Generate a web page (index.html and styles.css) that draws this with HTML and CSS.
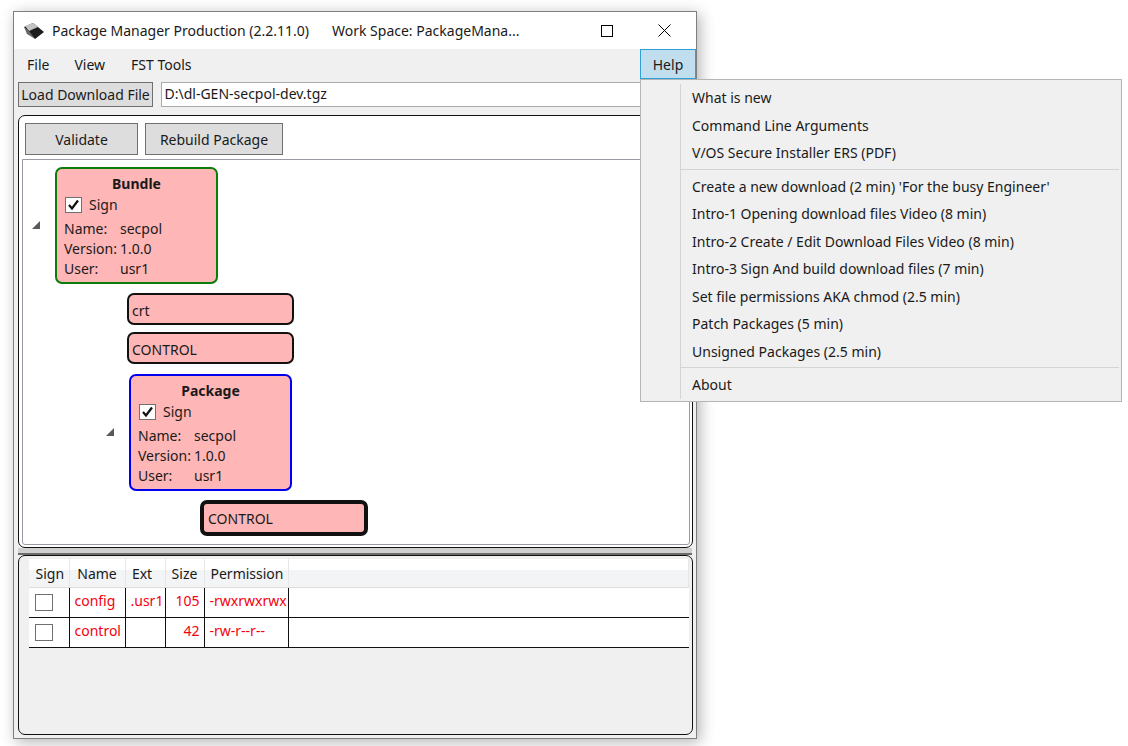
FILE: index.html
```html
<!DOCTYPE html>
<html>
<head>
<meta charset="utf-8"/>
<title>Package Manager Production</title>
<link rel="stylesheet" href="styles.css">
</head>
<body>

<div class="window">

  <div class="titlebar">
    <svg class="app-icon" width="22" height="18" viewBox="0 0 22 18">
      <polygon points="1,5 10,1 21,10 12,17" fill="#1c1c1c"/>
      <polygon points="2,4 10,1 15,5 6,9" fill="#c4c4c4"/>
      <polygon points="1,5 6,9 12,17 4,12" fill="#666"/>
    </svg>
    <span class="title">Package Manager Production (2.2.11.0)</span>
    <span class="workspace">Work Space: PackageMana...</span>
    <svg class="win-btn" width="12" height="12" viewBox="0 0 12 12"><rect x="0.5" y="0.5" width="11" height="11" fill="none" stroke="#000"/></svg>
    <svg class="win-btn close" width="13" height="13" viewBox="0 0 13 13"><path d="M0.5 0.5L12.5 12.5M12.5 0.5L0.5 12.5" fill="none" stroke="#000"/></svg>
  </div>

  <div class="menubar">
    <span class="menu-item">File</span>
    <span class="menu-item">View</span>
    <span class="menu-item">FST Tools</span>
    <span class="menu-help">Help</span>
  </div>

  <div class="filerow">
    <button class="load-btn">Load Download File</button>
    <div class="path">D:\dl-GEN-secpol-dev.tgz</div>
  </div>

  <div class="panel top-panel">
    <div class="actions">
      <button class="btn validate">Validate</button>
      <button class="btn rebuild">Rebuild Package</button>
    </div>
    <div class="tree">

      <div class="node bundle-node">
        <svg class="arrow" width="9" height="9" viewBox="0 0 9 9"><polygon points="0,8 8,0 8,8" fill="#595959"/></svg>
        <div class="card bundle">
          <div class="card-title">Bundle</div>
          <div class="sign">
            <svg class="check" width="17" height="16" viewBox="0 0 17 16"><rect x="0.5" y="0.5" width="16" height="15" fill="#fff" stroke="#707070"/><path d="M4 8L7 11.5L13 3.5" fill="none" stroke="#111" stroke-width="2.2"/></svg>
            Sign
          </div>
          <div class="info"><span>Name:</span><span>secpol</span></div>
          <div class="info"><span>Version:</span><span>1.0.0</span></div>
          <div class="info"><span>User:</span><span>usr1</span></div>
        </div>
      </div>

      <div class="leaf first-leaf">crt</div>
      <div class="leaf second-leaf">CONTROL</div>

      <div class="node package-node">
        <svg class="arrow" width="9" height="9" viewBox="0 0 9 9"><polygon points="0,8 8,0 8,8" fill="#595959"/></svg>
        <div class="card package">
          <div class="card-title">Package</div>
          <div class="sign">
            <svg class="check" width="17" height="16" viewBox="0 0 17 16"><rect x="0.5" y="0.5" width="16" height="15" fill="#fff" stroke="#707070"/><path d="M4 8L7 11.5L13 3.5" fill="none" stroke="#111" stroke-width="2.2"/></svg>
            Sign
          </div>
          <div class="info"><span>Name:</span><span>secpol</span></div>
          <div class="info"><span>Version:</span><span>1.0.0</span></div>
          <div class="info"><span>User:</span><span>usr1</span></div>
        </div>
      </div>

      <div class="leaf selected">CONTROL</div>
    </div>
  </div>

  <div class="splitter"></div>

  <div class="panel bottom-panel">
    <table class="files">
      <colgroup>
        <col class="c-sign"><col class="c-name"><col class="c-ext"><col class="c-size"><col class="c-perm"><col>
      </colgroup>
      <thead>
        <tr><th class="h-pad">Sign</th><th>Name</th><th class="h-ext">Ext</th><th>Size</th><th class="h-pad">Permission</th><th></th></tr>
      </thead>
      <tbody>
        <tr>
          <td class="cb"><span class="box"></span></td><td>config</td><td>.usr1</td><td class="num">105</td><td>-rwxrwxrwx</td><td></td>
        </tr>
        <tr>
          <td class="cb"><span class="box"></span></td><td>control</td><td></td><td class="num">42</td><td>-rw-r--r--</td><td></td>
        </tr>
      </tbody>
    </table>
  </div>

</div>

<div class="popup">
  <div class="popup-item">What is new</div>
  <div class="popup-item">Command Line Arguments</div>
  <div class="popup-item">V/OS Secure Installer ERS (PDF)</div>
  <div class="popup-sep"></div>
  <div class="popup-item">Create a new download (2 min) 'For the busy Engineer'</div>
  <div class="popup-item">Intro-1 Opening download files Video (8 min)</div>
  <div class="popup-item">Intro-2 Create / Edit Download Files Video (8 min)</div>
  <div class="popup-item">Intro-3 Sign And build download files (7 min)</div>
  <div class="popup-item">Set file permissions AKA chmod (2.5 min)</div>
  <div class="popup-item">Patch Packages (5 min)</div>
  <div class="popup-item">Unsigned Packages (2.5 min)</div>
  <div class="popup-sep"></div>
  <div class="popup-item">About</div>
</div>

</body>
</html>
```

FILE: styles.css
```css
html, body {
   height: 100%;
}

body {
   margin: 0;
   padding: 11px 0 0 13px;
   box-sizing: border-box;
   overflow: hidden;
   background-color: white;
   font-family: "Noto Sans", "Open Sans", sans-serif;
   font-size: 14px;
   color: #1a1a1a;
}

button {
   font: inherit;
   color: inherit;
}

.window {
   position: relative;
   width: 684px;
   height: 728px;
   box-sizing: border-box;
   border: 1px solid #7f7f7f;
   background-color: #f0f0f0;
   box-shadow: 3px 3px 14px rgba(0, 0, 0, 0.3);
   display: flex;
   flex-direction: column;
}

.titlebar {
   height: 37px;
   flex: none;
   background-color: white;
   display: flex;
   align-items: center;
   padding-left: 9px;
}

.app-icon {
   margin-right: 7px;
}

.title {
   width: 280px;
}

.workspace {
   width: 266px;
}

.win-btn {
   margin-left: 3px;
}

.win-btn.close {
   margin-left: 45px;
}

.menubar {
   height: 30px;
   flex: none;
   display: flex;
   align-items: center;
   padding-left: 13px;
   position: relative;
}

.menu-item {
   margin-right: 25px;
}

.menu-item:nth-child(2) {
   margin-right: 26px;
}

.menu-help {
   position: absolute;
   top: 0;
   right: 0;
   width: 54px;
   height: 28px;
   border: 1px solid #2f9fd8;
   background-color: #c1deee;
   display: flex;
   align-items: center;
   justify-content: center;
}

.filerow {
   height: 36px;
   flex: none;
   display: flex;
   align-items: flex-start;
   padding: 3px 4px 0 4px;
   box-sizing: border-box;
   gap: 8px;
}

.load-btn {
   width: 135px;
   height: 25px;
   padding: 0;
   border: 1px solid #707070;
   background-color: #dddddd;
   white-space: nowrap;
}

.path {
   flex: 1;
   height: 23px;
   line-height: 21px;
   border: 1px solid #ababab;
   background-color: white;
   padding-left: 2.5px;
}

.panel {
   margin: 0 3px 0 4px;
   border: 1px solid #111;
   border-radius: 7px;
   box-sizing: border-box;
}

.top-panel {
   height: 433px;
   flex: none;
   padding: 7px 2px 2px 3px;
   display: flex;
   flex-direction: column;
   background-color: white;
}

.actions {
   display: flex;
   gap: 7px;
   padding-left: 3px;
   height: 36px;
   flex: none;
}

.btn {
   height: 32px;
   padding: 0;
   border: 1px solid #707070;
   background-color: #dddddd;
}

.validate {
   width: 113px;
}

.rebuild {
   width: 138px;
}

.tree {
   flex: 1;
   border: 1px solid #9a9aa4;
   border-radius: 0 0 3px 3px;
   background-color: white;
   padding-top: 7px;
}

.node {
   display: flex;
   align-items: center;
}

.bundle-node {
   margin-left: 9px;
}

.arrow {
   margin-right: 14px;
}

.package-node {
   margin-left: 83px;
   margin-top: 10px;
}

.card {
   width: 163px;
   height: 117px;
   box-sizing: border-box;
   border-radius: 7px;
   background-color: #ffb6b6;
   padding: 5px 7px 0 7px;
   line-height: 20px;
}

.bundle {
   border: 2px solid #0a7d0a;
}

.package {
   border: 2px solid #0000f0;
}

.card-title {
   font-weight: bold;
   text-align: center;
}

.sign {
   display: flex;
   align-items: center;
   height: 22px;
   margin: 0 0 3px 0;
}

.check {
   margin: 0 7px 0 1px;
}

.info {
   display: flex;
}

.info span:first-child {
   width: 56px;
}

.leaf {
   box-sizing: border-box;
   background-color: #ffb6b6;
   width: 167px;
   border: 2px solid #111;
   border-radius: 7px;
   height: 32px;
   line-height: 31px;
   padding-left: 3px;
}

.first-leaf {
   margin: 9px 0 0 104px;
}

.second-leaf {
   margin: 7px 0 0 104px;
}

.selected {
   margin: 9px 0 0 177px;
   width: 168px;
   height: 36px;
   border-width: 4px;
   line-height: 30px;
   padding-left: 4px;
}

.splitter {
   height: 7px;
   flex: none;
   margin: 0 4px;
   background-color: #cfcfcf;
   border-bottom: 2px solid #6b6b6b;
   box-sizing: border-box;
}

.bottom-panel {
   height: 180px;
   flex: none;
   margin-bottom: 4px;
   padding: 3px 3px 0 10px;
   background-color: #f0f0f0;
}

.files {
   width: 100%;
   table-layout: fixed;
   border-collapse: collapse;
   background-color: white;
}

.c-sign { width: 40px; }
.c-name { width: 56px; }
.c-ext { width: 40px; }
.c-size { width: 39px; }
.c-perm { width: 84px; }

.files th {
   height: 28px;
   padding: 0;
   font-weight: normal;
   background: linear-gradient(#ffffff 40%, #f3f4f6 40%);
   border-right: 1px solid #e6e6e6;
   border-bottom: 1px solid #dcdcdc;
}

.files .h-ext {
   padding-right: 6px;
}

.files .h-pad {
   padding-left: 2px;
}

.files td {
   height: 30px;
   padding: 0 0 4px 5px;
   box-sizing: border-box;
   color: #f50010;
   border-right: 1px solid #111;
   border-bottom: 1px solid #111;
}

.files td:last-child {
   border-right: none;
}

.files .cb {
   padding-bottom: 0;
}

.files .num {
   text-align: right;
   padding: 0 4px 4px 0;
}

.box {
   display: block;
   width: 18px;
   height: 17px;
   box-sizing: border-box;
   margin-left: 1px;
   border: 1px solid #707070;
   background-color: white;
}

.popup {
   position: absolute;
   left: 640px;
   top: 79px;
   width: 482px;
   height: 323px;
   box-sizing: border-box;
   border: 1px solid #b5b5b5;
   background-color: #f0f0f0;
   padding: 4px 2px 6px 39px;
}

.popup-item {
   height: 27.5px;
   line-height: 27px;
   padding-left: 11px;
   border-left: 1px solid #d4d4d4;
   white-space: nowrap;
}

.popup-sep {
   height: 6px;
   border-left: 1px solid #d4d4d4;
   background: linear-gradient(transparent 2px, #d4d4d4 2px, #d4d4d4 3px, transparent 3px);
}
```
